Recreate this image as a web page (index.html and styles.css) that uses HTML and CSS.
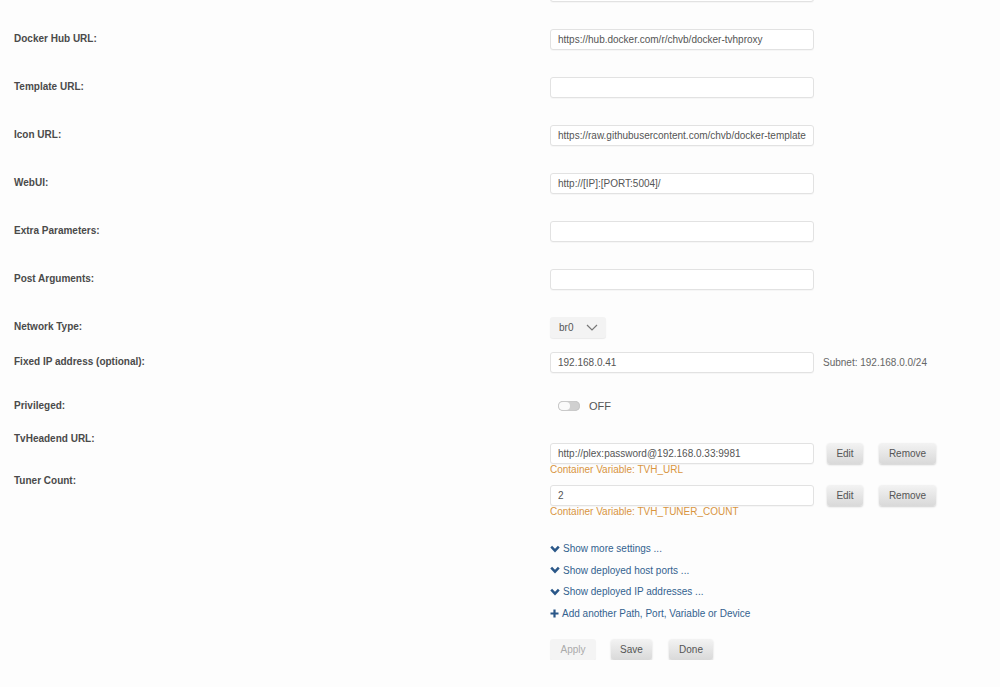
FILE: index.html
```html
<!DOCTYPE html>
<html lang="en">
  <head>
    <meta charset="UTF-8" />
    <title>Update Container</title>
    <link rel="stylesheet" href="styles.css">
  </head>
  <body>
    <form class="settings">
      <div class="row">
        <label></label>
        <div><input class="text" type="text" value="" /></div>
      </div>
      <div class="row">
        <label>Docker Hub URL:</label>
        <div><input class="text" type="text" value="https://hub.docker.com/r/chvb/docker-tvhproxy" /></div>
      </div>
      <div class="row">
        <label>Template URL:</label>
        <div><input class="text" type="text" value="" /></div>
      </div>
      <div class="row">
        <label>Icon URL:</label>
        <div><input class="text" type="text" value="https://raw.githubusercontent.com/chvb/docker-templates/master/chvb/images/tvhproxy.png" /></div>
      </div>
      <div class="row">
        <label>WebUI:</label>
        <div><input class="text" type="text" value="http://[IP]:[PORT:5004]/" /></div>
      </div>
      <div class="row">
        <label>Extra Parameters:</label>
        <div><input class="text" type="text" value="" /></div>
      </div>
      <div class="row">
        <label>Post Arguments:</label>
        <div><input class="text" type="text" value="" /></div>
      </div>
      <div class="row network">
        <label>Network Type:</label>
        <div>
          <div class="select">
            <span>br0</span>
            <svg width="12" height="7" viewBox="0 0 12 7"><polyline points="1,1 6,6 11,1" fill="none" stroke="#777" stroke-width="1.2"/></svg>
          </div>
        </div>
      </div>
      <div class="row fixed-ip">
        <label>Fixed IP address (optional):</label>
        <div class="inline">
          <input class="text" type="text" value="192.168.0.41" />
          <span class="subnet">Subnet: 192.168.0.0/24</span>
        </div>
      </div>
      <div class="row privileged">
        <label>Privileged:</label>
        <div class="inline switch">
          <span class="track"><span class="knob"></span></span>
          <span class="state">OFF</span>
        </div>
      </div>
      <div class="row config">
        <label>TvHeadend URL:</label>
        <div>
          <div class="inline">
            <input class="text" type="text" value="http://plex:password@192.168.0.33:9981" />
            <button type="button" class="btn edit">Edit</button>
            <button type="button" class="btn remove">Remove</button>
          </div>
          <div class="note">Container Variable: TVH_URL</div>
        </div>
      </div>
      <div class="row config">
        <label>Tuner Count:</label>
        <div>
          <div class="inline">
            <input class="text" type="text" value="2" />
            <button type="button" class="btn edit">Edit</button>
            <button type="button" class="btn remove">Remove</button>
          </div>
          <div class="note">Container Variable: TVH_TUNER_COUNT</div>
        </div>
      </div>
      <div class="row actions">
        <label></label>
        <div>
          <ul class="links">
            <li><svg width="10" height="8" viewBox="0 0 10 8"><polyline points="1.2,1.6 5,5.6 8.8,1.6" fill="none" stroke="#2a5788" stroke-width="2.5"/></svg>Show more settings ...</li>
            <li><svg width="10" height="8" viewBox="0 0 10 8"><polyline points="1.2,1.6 5,5.6 8.8,1.6" fill="none" stroke="#2a5788" stroke-width="2.5"/></svg>Show deployed host ports ...</li>
            <li><svg width="10" height="8" viewBox="0 0 10 8"><polyline points="1.2,1.6 5,5.6 8.8,1.6" fill="none" stroke="#2a5788" stroke-width="2.5"/></svg>Show deployed IP addresses ...</li>
            <li class="add"><svg width="9" height="9" viewBox="0 0 9 9"><path d="M4.5 0.5v8M0.5 4.5h8" stroke="#2a5788" stroke-width="2.2"/></svg>Add another Path, Port, Variable or Device</li>
          </ul>
          <div class="buttons">
            <button type="button" class="btn apply" disabled>Apply</button>
            <button type="button" class="btn save">Save</button>
            <button type="button" class="btn done">Done</button>
          </div>
        </div>
      </div>
    </form>
  </body>
</html>
```

FILE: styles.css
```css
body {
  margin: 0;
  background: #fdfdfd;
  font-family: "Liberation Sans", Arial, sans-serif;
  font-size: 10px;
  color: #555;
  overflow: hidden;
}
.settings {
  margin-top: -33px;
  padding-left: 14px;
}
.row {
  display: grid;
  grid-template-columns: 536px 1fr;
  align-items: center;
  height: 48px;
}
.row > label {
  font-weight: bold;
  font-size: 10px;
  color: #4a4a4a;
  line-height: 12px;
}
.row.fixed-ip {
  height: 22px;
}
.row.privileged {
  box-sizing: border-box;
  height: 60px;
  padding-top: 6px;
}
.row.config {
  height: auto;
  align-items: start;
}
.row.config > div {
  padding-top: 10px;
}
.row.actions {
  height: auto;
  align-items: start;
}
.inline {
  display: flex;
  align-items: center;
}
input.text {
  box-sizing: border-box;
  width: 264px;
  height: 21px;
  margin: 0;
  padding: 0 7px;
  border: 1px solid #e2e2e2;
  border-radius: 3px;
  background: #fff;
  box-shadow: 0 1px 1px rgba(0, 0, 0, 0.03);
  font-family: inherit;
  font-size: 10px;
  color: #555;
  outline: none;
}
.select {
  box-sizing: border-box;
  width: 56px;
  height: 21px;
  display: flex;
  align-items: center;
  justify-content: space-between;
  padding: 0 8px 0 9px;
  background: #f3f3f3;
  border-radius: 3px;
  box-shadow: 0 1px 1px rgba(0, 0, 0, 0.08);
  color: #555;
}
.subnet {
  margin-left: 9px;
  color: #666;
}
.switch {
  padding-left: 8px;
}
.track {
  position: relative;
  width: 22px;
  height: 10px;
  border-radius: 5px;
  background: #d0d0d0;
  box-shadow: inset 0 0 1px rgba(0, 0, 0, 0.3);
}
.knob {
  position: absolute;
  left: 1px;
  top: 1px;
  width: 11px;
  height: 8px;
  border-radius: 4px;
  background: #fbfbfb;
}
.state {
  margin-left: 9px;
  font-size: 11px;
  color: #555;
}
.btn {
  height: 21px;
  padding: 0;
  border: none;
  border-radius: 3px;
  background: linear-gradient(to bottom, #f3f3f3, #d9d9d9);
  box-shadow: 0 1px 2px rgba(0, 0, 0, 0.18);
  font-family: inherit;
  font-size: 10px;
  color: #555;
}
.btn.edit {
  width: 36px;
  margin-left: 13px;
}
.btn.remove {
  width: 57px;
  margin-left: 16px;
}
.note {
  line-height: 10px;
  margin-top: 1px;
  color: #d9953f;
}
.links {
  list-style: none;
  margin: 21px 0 0;
  padding: 0;
}
.links li {
  display: flex;
  align-items: center;
  height: 21.5px;
  color: #33628f;
}
.links svg {
  margin-right: 3px;
}
.buttons {
  display: flex;
  margin-top: 15px;
}
.btn.apply {
  width: 46px;
  background: #f4f4f4;
  color: #aaa;
  box-shadow: 0 1px 1px rgba(0, 0, 0, 0.06);
}
.btn.save {
  width: 41px;
  margin-left: 15px;
}
.btn.done {
  width: 44px;
  margin-left: 17px;
}
```
